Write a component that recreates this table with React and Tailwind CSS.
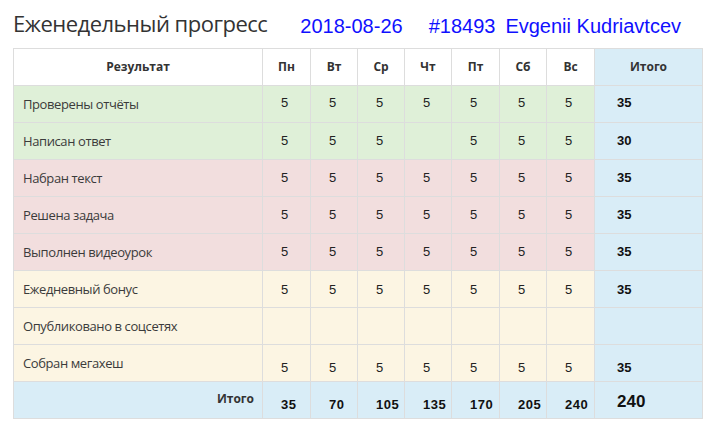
import React from 'react';

const days = ['Пн', 'Вт', 'Ср', 'Чт', 'Пт', 'Сб', 'Вс'];

const rows = [
  { label: 'Проверены отчёты', bg: 'bg-[#dff0d8]', vals: [5, 5, 5, 5, 5, 5, 5], total: 35, num: 'pb-[3px]' },
  { label: 'Написан ответ', bg: 'bg-[#dff0d8]', vals: [5, 5, 5, '', 5, 5, 5], total: 30, num: '' },
  { label: 'Набран текст', bg: 'bg-[#f2dede]', vals: [5, 5, 5, 5, 5, 5, 5], total: 35, num: '' },
  { label: 'Решена задача', bg: 'bg-[#f2dede]', vals: [5, 5, 5, 5, 5, 5, 5], total: 35, num: '' },
  { label: 'Выполнен видеоурок', bg: 'bg-[#f2dede]', vals: [5, 5, 5, 5, 5, 5, 5], total: 35, num: '' },
  { label: 'Ежедневный бонус', bg: 'bg-[#fcf5e3]', vals: [5, 5, 5, 5, 5, 5, 5], total: 35, num: 'pt-[2px]' },
  { label: 'Опубликовано в соцсетях', bg: 'bg-[#fcf5e3]', vals: ['', '', '', '', '', '', ''], total: '', num: '' },
  { label: 'Собран мегахеш', bg: 'bg-[#fcf5e3]', vals: [5, 5, 5, 5, 5, 5, 5], total: 35, num: 'pt-[10px]' },
];

const dayTotals = [35, 70, 105, 135, 170, 205, 240];

export default function App() {
  return (
    <div className="h-[429px] w-[722px] bg-white font-['Open_Sans',sans-serif]">
      <div className="flex h-[48px] pl-[13px]">
        <h1 className="mt-[8px] text-[22px] leading-[30px] tracking-[-0.5px] text-[#333]">Еженедельный прогресс</h1>
        <div className="ml-[33px] mt-[14px] flex font-['Liberation_Sans',Arial,sans-serif] text-[20px] leading-[24px] text-[#1010ff]">
          <span>2018-08-26</span>
          <span className="ml-[26px]">#18493</span>
          <span className="ml-[10px]">Evgenii Kudriavtcev</span>
        </div>
      </div>

      <table className="ml-[13px] w-[689px] table-fixed border-collapse border border-[#ddd]">
        <colgroup>
          <col className="w-[249px]" />
          <col className="w-[48px]" />
          <col className="w-[47px]" />
          <col className="w-[47px]" />
          <col className="w-[47px]" />
          <col className="w-[48px]" />
          <col className="w-[47px]" />
          <col className="w-[48px]" />
          <col className="w-[108px]" />
        </colgroup>
        <thead>
          <tr className="h-[37px] text-[12px] font-bold text-[#333]">
            <th className="border border-[#ddd] p-0 text-center">Результат</th>
            {days.map((d) => (
              <th key={d} className="border border-[#ddd] p-0 text-center">
                {d}
              </th>
            ))}
            <th className="border border-[#ddd] bg-[#d9edf7] p-0 text-center">Итого</th>
          </tr>
        </thead>
        <tbody>
          {rows.map((r) => (
            <tr key={r.label} className={`h-[37px] ${r.bg}`}>
              <td className="border border-[#ddd] p-0 pl-[9px] pt-[2px] text-[13px] tracking-[-0.4px] text-[#3b3b3b]">
                {r.label}
              </td>
              {r.vals.map((v, i) => (
                <td
                  key={i}
                  className={`border border-[#ddd] p-0 pl-[18px] font-['Liberation_Sans',Arial,sans-serif] text-[13px] text-[#222] ${r.num}`}
                >
                  {v}
                </td>
              ))}
              <td
                className={`border border-[#ddd] bg-[#d9edf7] p-0 pl-[22px] font-['Liberation_Sans',Arial,sans-serif] text-[13px] font-bold text-[#111] ${r.num}`}
              >
                {r.total}
              </td>
            </tr>
          ))}
          <tr className="h-[37px] bg-[#d9edf7]">
            <td className="border border-[#ddd] p-0 pb-[2px] pr-[8px] text-right text-[12px] font-bold text-[#333]">
              Итого
            </td>
            {dayTotals.map((t, i) => (
              <td
                key={i}
                className="whitespace-nowrap border border-[#ddd] p-0 pl-[18px] pt-[10px] font-['Liberation_Sans',Arial,sans-serif] text-[13px] font-bold tracking-[0.5px] text-[#111]"
              >
                {t}
              </td>
            ))}
            <td className="border border-[#ddd] p-0 pl-[22px] pt-[4px] font-['Liberation_Sans',Arial,sans-serif] text-[17px] font-bold text-[#111]">
              240
            </td>
          </tr>
        </tbody>
      </table>
    </div>
  );
}
